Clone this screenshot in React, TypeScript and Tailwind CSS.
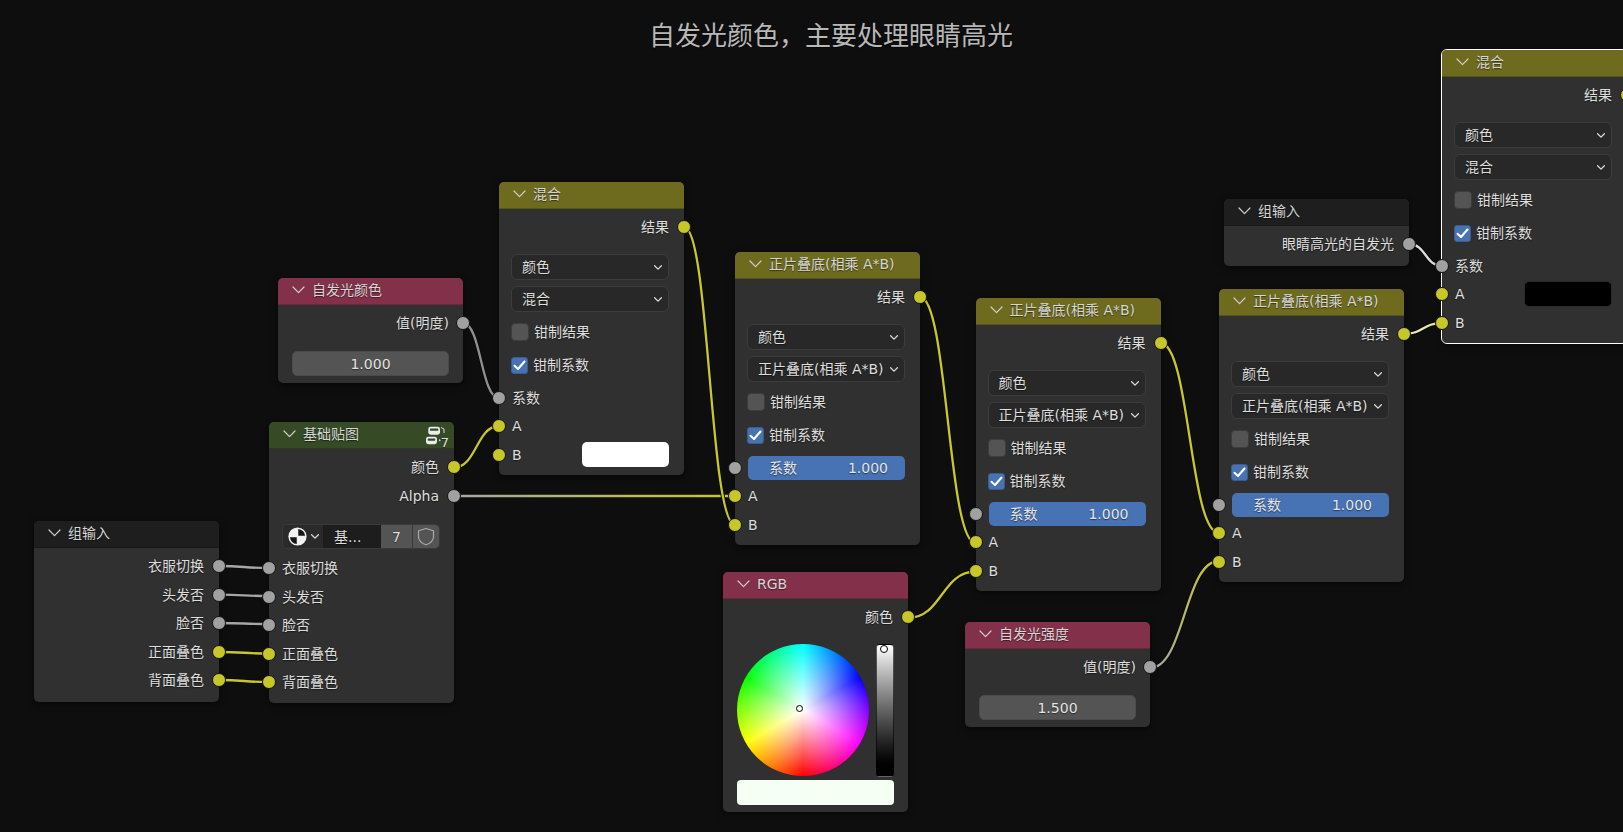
import React from "react";

const Y = "#c7c729";
const G = "#a1a1a1";

function Chevron({ small }: { small?: boolean }) {
  return small ? (
    <svg width="10" height="7" viewBox="0 0 10 7" className="shrink-0" fill="none">
      <path d="M1.6 1.7 L5 5.1 L8.4 1.7" stroke="#d8d8d8" strokeWidth="1.3" strokeLinecap="round" strokeLinejoin="round" />
    </svg>
  ) : (
    <svg width="13" height="8" viewBox="0 0 13 8" className="shrink-0" fill="none">
      <path d="M1 1 L6.5 6.6 L12 1" stroke="#cfcfcf" strokeWidth="1.2" strokeLinecap="round" strokeLinejoin="round" />
    </svg>
  );
}

function Socket({ side, color }: { side: "l" | "r"; color: string }) {
  const cls =
    side === "l"
      ? "absolute left-[-7px] top-1/2 -translate-y-1/2 w-[14px] h-[14px] rounded-full border-[1.5px] border-[#141414]"
      : "absolute right-[-7px] top-1/2 -translate-y-1/2 w-[14px] h-[14px] rounded-full border-[1.5px] border-[#141414]";
  return color === Y ? <div className={cls + " bg-[#c7c729]"} /> : <div className={cls + " bg-[#a1a1a1]"} />;
}

function Out({ label, color, tight }: { label: string; color: string; tight?: boolean }) {
  return (
    <div className={"relative h-[28.5px] flex items-center justify-end " + (tight ? "pr-[14px]" : "pr-[15px]")}>
      <span>{label}</span>
      <Socket side="r" color={color} />
    </div>
  );
}

function In({ label, color, children }: { label?: string; color: string; children?: React.ReactNode }) {
  return (
    <div className="relative h-[28.5px] flex items-center pl-[13px] pr-[15px]">
      {label && <span>{label}</span>}
      {children}
      <Socket side="l" color={color} />
    </div>
  );
}

function Header({ title, bg, right }: { title: string; bg: string; right?: React.ReactNode }) {
  return (
    <div className={"h-[27px] pb-[2px] flex items-center pl-[14px] gap-[7px] border-b border-black/20 rounded-t-[5px] text-[#d6d6d6] relative " + bg}>
      <Chevron />
      <span>{title}</span>
      {right}
    </div>
  );
}

function Node({ pos, children, selected }: { pos: string; children: React.ReactNode; selected?: boolean }) {
  return (
    <div
      className={
        "absolute w-[185px] bg-[#303030] rounded-[5px] shadow-[0_2px_7px_rgba(0,0,0,0.55)] " +
        (selected ? "outline outline-1 outline-white " : "") +
        pos
      }
    >
      {children}
    </div>
  );
}

function Select({ label }: { label: string }) {
  return (
    <div className="h-[26px] flex items-center justify-between pl-[10px] pr-[5px] bg-[#282828] border border-[#3c3c3c] rounded-[6px] whitespace-nowrap">
      <span>{label}</span>
      <Chevron small />
    </div>
  );
}

function Check({ label, on }: { label: string; on?: boolean }) {
  return (
    <div className="h-[33px] flex items-center ml-[12px] gap-[5px]">
      {on ? (
        <div className="w-[17px] h-[17px] rounded-[3px] bg-[#4772b3] border border-[#3d5c8c] flex items-center justify-center">
          <svg width="13" height="11" viewBox="0 0 13 11" fill="none">
            <path d="M1.5 5.8 L5 9 L11.5 1.5" stroke="#ffffff" strokeWidth="2.1" strokeLinejoin="round" strokeLinecap="round" />
          </svg>
        </div>
      ) : (
        <div className="w-[18px] h-[18px] rounded-[4px] bg-[#545454] border border-[#3d3d3d]" />
      )}
      <span>{label}</span>
    </div>
  );
}

function MathControls({ op }: { op: string }) {
  return (
    <>
      <div className="mt-[12.5px] ml-[12px] w-[158px] flex flex-col gap-[6px]">
        <Select label="颜色" />
        <Select label={op} />
      </div>
      <div className="mt-[3.5px]">
        <Check label="钳制结果" />
        <Check label="钳制系数" on />
      </div>
    </>
  );
}

function MixNode({ pos, selected, swatch }: { pos: string; selected?: boolean; swatch: "white" | "black" }) {
  return (
    <Node pos={pos} selected={selected}>
      <Header title="混合" bg="bg-[#6e6a1e]" />
      <div className="pt-[4px] pb-[6px]">
        <Out label="结果" color={Y} />
        <MathControls op="混合" />
        <div className="mt-[2px]">
          <In label="系数" color={G} />
          <In label="A" color={Y}>
            {swatch === "black" && <div className="ml-auto w-[88px] h-[26px] rounded-[5px] bg-black border border-[#2a2a2a]" />}
          </In>
          <In label="B" color={Y}>
            {swatch === "white" && <div className="ml-auto w-[87px] h-[25px] rounded-[5px] bg-white" />}
          </In>
        </div>
      </div>
    </Node>
  );
}

function MultiplyNode({ pos }: { pos: string }) {
  const op = "正片叠底(相乘 A*B)";
  return (
    <Node pos={pos}>
      <Header title={op} bg="bg-[#6e6a1e]" />
      <div className="pt-[4px] pb-[6px]">
        <Out label="结果" color={Y} />
        <MathControls op={op} />
        <div className="mt-[2px]">
          <In color={G}>
            <div className="w-full h-[24px] rounded-[5px] bg-[#4772b3] flex items-center justify-between pl-[21px] pr-[17px] text-[#e6e6e6]">
              <span>系数</span>
              <span>1.000</span>
            </div>
          </In>
          <In label="A" color={Y} />
          <In label="B" color={Y} />
        </div>
      </div>
    </Node>
  );
}

function ValueNode({ pos, title, value }: { pos: string; title: string; value: string }) {
  return (
    <Node pos={pos}>
      <Header title={title} bg="bg-[#83314a]" />
      <div className="pt-[4px] pb-[7px]">
        <Out label="值(明度)" color={G} tight />
        <div className="mt-[13.5px] ml-[14px] w-[157px] h-[25px] rounded-[5px] bg-[#545454] border border-[#4a4a4a] flex items-center justify-center text-[#e4e4e4]">
          {value}
        </div>
      </div>
    </Node>
  );
}

function GroupIcon() {
  return (
    <div className="absolute right-[5px] top-[3px] w-[25px] h-[22px]">
      <svg width="25" height="22" viewBox="0 0 25 22" fill="none">
        <rect x="4.3" y="1.7" width="11.7" height="8" rx="2.4" fill="#ececec" />
        <rect x="6" y="3.6" width="8.3" height="2.2" rx="0.6" fill="#354a25" />
        <rect x="2" y="11.7" width="11" height="7.5" rx="2.4" fill="#ececec" />
        <rect x="3.7" y="13.6" width="7.6" height="2.1" rx="0.6" fill="#354a25" />
        <path d="M17 2.5 L20 4 V8" stroke="#d8d8d8" strokeWidth="1" />
        <path d="M15 14 L17 15.2 L15 16.4 Z" fill="#d8d8d8" />
      </svg>
      <span className="absolute right-[0px] bottom-[-2px] text-[13px] leading-none text-[#e0e0e0]">7</span>
    </div>
  );
}

function ImageSelector() {
  return (
    <div className="mt-[14px] ml-[13px] w-[158px] h-[25px] flex rounded-[5px] overflow-hidden border border-[#3a3a3a] bg-[#2a2a2a]">
      <div className="w-[41px] flex items-center pl-[5px] gap-[3px] border-r border-[#1c1c1c]">
        <svg width="19" height="19" viewBox="0 0 20 20" className="shrink-0">
          <circle cx="10" cy="10" r="9.6" fill="#f2f2f2" />
          <path d="M10.8 9.2 V2 A8 8 0 0 1 18 9.2 Z" fill="#161616" />
          <path d="M9.2 10.8 V18 A8 8 0 0 1 2 10.8 Z" fill="#161616" />
        </svg>
        <Chevron small />
      </div>
      <div className="w-[57px] bg-[#1d1d1d] flex items-center pl-[10px] border-r border-[#1c1c1c]">基...</div>
      <div className="w-[32px] bg-[#545454] flex items-center justify-center border-r border-[#3a3a3a]">7</div>
      <div className="flex-1 bg-[#545454] flex items-center justify-center">
        <svg width="18" height="19" viewBox="0 0 18 19" fill="none">
          <path d="M9 1.5 L16.5 3.8 V9.5 C16.5 13.5 13 16.5 9 17.8 C5 16.5 1.5 13.5 1.5 9.5 V3.8 Z" stroke="#a8a8a8" strokeWidth="1.2" strokeLinejoin="round" />
        </svg>
      </div>
    </div>
  );
}

const groupRows: [string, string][] = [
  ["衣服切换", G],
  ["头发否", G],
  ["脸否", G],
  ["正面叠色", Y],
  ["背面叠色", Y],
];

type Wire = [number, number, number, number, string, string];
const wires: Wire[] = [
  [219, 566, 269, 568, "#a6a6a6", "#a6a6a6"],
  [219, 594.7, 269, 596, "#a6a6a6", "#a6a6a6"],
  [219, 623, 269, 624, "#a6a6a6", "#a6a6a6"],
  [219, 652, 269, 653.5, Y, Y],
  [219, 680, 269, 682, Y, Y],
  [454, 467.5, 499, 426, Y, Y],
  [454, 496, 735, 496, "#a8a8a8", Y],
  [463, 323, 499, 398, "#909090", "#909090"],
  [684, 227, 735, 524.7, Y, Y],
  [920, 297, 975.5, 543, Y, Y],
  [908, 618, 975.5, 571.5, Y, Y],
  [1160.5, 343, 1219, 533, Y, Y],
  [1150, 668, 1219, 561, "#a8a8a0", Y],
  [1409, 244, 1442, 266, "#e4e4e4", "#d8d8d8"],
  [1404, 334, 1442, 323, "#f0f0c0", "#e0e0a0"],
];

function Wires() {
  return (
    <svg className="absolute inset-0" width="1623" height="832" fill="none">
      <defs>
        {wires.map((w, i) => (
          <linearGradient key={i} id={"w" + i} gradientUnits="userSpaceOnUse" x1={w[0]} y1={w[1]} x2={w[2]} y2={w[3] + 0.01}>
            <stop offset="0" stopColor={w[4]} />
            <stop offset="1" stopColor={w[5]} />
          </linearGradient>
        ))}
      </defs>
      {wires.map((w, i) => {
        const h = (w[2] - w[0]) * 0.5;
        const d = `M${w[0]} ${w[1]} C${w[0] + h} ${w[1]} ${w[2] - h} ${w[3]} ${w[2]} ${w[3]}`;
        return (
          <g key={i}>
            <path d={d} stroke="#0a0a0a" strokeWidth="4.2" />
            <path d={d} stroke={`url(#w${i})`} strokeWidth="2.3" />
          </g>
        );
      })}
    </svg>
  );
}

export default function App() {
  return (
    <div className="relative w-[1623px] h-[832px] overflow-hidden bg-[#0e0e0e] font-['DejaVu_Sans','Noto_Sans_CJK_SC',sans-serif] text-[14px] leading-none text-[#dedede] [text-shadow:0_1px_1px_rgba(0,0,0,0.5)]">
      <div className="absolute left-[649px] top-[18px] text-[26px] leading-[32px] text-[#b8b8b8] font-['Noto_Sans_CJK_SC',sans-serif] font-normal whitespace-nowrap">
        自发光颜色，主要处理眼睛高光
      </div>

      <Wires />

      {/* group input */}
      <Node pos="left-[34px] top-[521px]">
        <Header title="组输入" bg="bg-[#1e1e1e]" />
        <div className="pt-[4px] pb-[7.5px]">
          {groupRows.map(([l, c]) => (
            <Out key={l} label={l} color={c} />
          ))}
        </div>
      </Node>

      {/* base texture group */}
      <Node pos="left-[269px] top-[422px]">
        <Header title="基础贴图" bg="bg-[#354a25]" right={<GroupIcon />} />
        <div className="pt-[4px] pb-[6px]">
          <Out label="颜色" color={Y} />
          <Out label="Alpha" color={G} />
          <ImageSelector />
          <div className="mt-[5px]">
            {groupRows.map(([l, c]) => (
              <In key={l} label={l} color={c} />
            ))}
          </div>
        </div>
      </Node>

      <ValueNode pos="left-[278px] top-[278px]" title="自发光颜色" value="1.000" />
      <MixNode pos="left-[499px] top-[182px]" swatch="white" />
      <MultiplyNode pos="left-[735px] top-[252px]" />
      <MultiplyNode pos="left-[975.5px] top-[298px]" />

      {/* RGB */}
      <Node pos="left-[723px] top-[572px]">
        <Header title="RGB" bg="bg-[#83314a]" />
        <div className="pt-[4px] pb-[7px]">
          <Out label="颜色" color={Y} />
          <div className="mt-[12.5px] ml-[14px] w-[157px] h-[133px] flex justify-between">
            <div className="relative w-[132px] h-[132px] rounded-full bg-[radial-gradient(circle_closest-side,#ffffff_0%,#ffffff00_100%),conic-gradient(from_180deg,#ff0000,#ffff00,#00ff00,#00ffff,#0000ff,#ff00ff,#ff0000)]">
              <div className="absolute left-[59px] top-[61px] w-[7px] h-[7px] rounded-full border border-black bg-white" />
            </div>
            <div className="relative w-[18px] h-[133px] rounded-[4px] border border-black/60 bg-gradient-to-b from-white to-black">
              <div className="absolute left-[3px] top-[0px] w-[8px] h-[8px] rounded-full border border-black bg-white" />
            </div>
          </div>
          <div className="mt-[3px] ml-[14px] w-[157px] h-[24.5px] rounded-[4px] bg-[#f5fff3]" />
        </div>
      </Node>

      <ValueNode pos="left-[965px] top-[622px]" title="自发光强度" value="1.500" />
      <MultiplyNode pos="left-[1219px] top-[289px]" />

      {/* group input 2 */}
      <Node pos="left-[1224px] top-[199px]">
        <Header title="组输入" bg="bg-[#1e1e1e]" />
        <div className="pt-[4px] pb-[7.5px]">
          <Out label="眼睛高光的自发光" color={G} />
        </div>
      </Node>

      <MixNode pos="left-[1442px] top-[50px]" selected swatch="black" />
    </div>
  );
}
